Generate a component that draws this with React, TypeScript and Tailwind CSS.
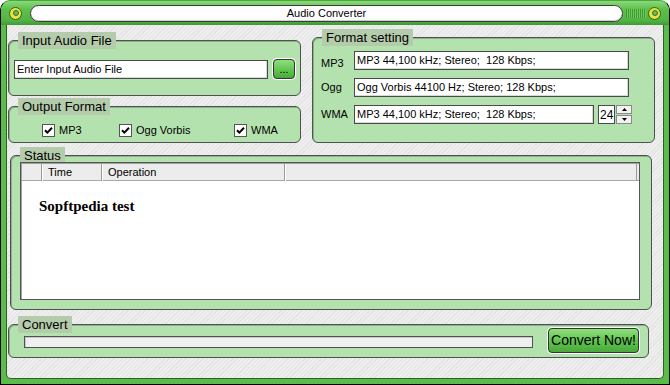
import React from "react";

const ui = "font-['Liberation_Sans',Arial,sans-serif]";

function Knob() {
  return (
    <div className="flex h-[13px] w-[13px] shrink-0 items-center justify-center rounded-full border border-[#2f5f27] bg-[#e8e23c]">
      <div className="h-[6px] w-[6px] rounded-full border border-[#3d6d31] bg-[#5fc14e]" />
    </div>
  );
}

function Group({
  title,
  className,
  children,
}: {
  title: string;
  className: string;
  children?: React.ReactNode;
}) {
  return (
    <fieldset
      className={`rounded-[6px] border border-[#505050] bg-[#b4e2ae] shadow-[inset_1px_1px_0_#8fb08b] ${className}`}
    >
      <legend className="ml-[9px] bg-[#b4ccab] px-[4px] text-[13px] leading-[17px] text-black">
        {title}
      </legend>
      {children}
    </fieldset>
  );
}

function TextBox({ value, w }: { value: string; w: string }) {
  return (
    <div
      className={`flex h-[19px] items-center border border-[#4a4a4a] bg-white pl-[2px] text-[11px] text-black shadow-[inset_-1px_-1px_0_#d8d8d8] ${w}`}
    >
      <span className="whitespace-pre">{value}</span>
    </div>
  );
}

function Check({ label }: { label: string }) {
  return (
    <div className="flex items-center gap-[4px]">
      <div className="flex h-[13px] w-[13px] items-center justify-center border border-[#555] bg-white">
        <svg width="9" height="9" viewBox="0 0 9 9">
          <path d="M1 4.2 L3.4 6.6 L8 1.8" fill="none" stroke="#000" strokeWidth="2" />
        </svg>
      </div>
      <span className="text-[11px] text-black">{label}</span>
    </div>
  );
}

export default function App() {
  return (
    <div
      className={`flex h-[385px] w-[670px] flex-col overflow-hidden rounded-t-[10px] border border-black border-t-[#4aa83c] bg-[#5abd49] ${ui}`}
    >
      {/* title bar */}
      <div className="flex h-[24px] shrink-0 items-center bg-[linear-gradient(#8ad97a,#5dc04c_35%,#53b443_80%,#3f9a33)] pl-[8px]">
        <Knob />
        <div className="ml-[8px] flex h-[17px] w-[593px] items-center justify-center rounded-full border border-[#3c3c3c] bg-white text-[11px] text-black shadow-[inset_0_-1px_0_#cfcfcf]">
          Audio Converter
        </div>
        <div className="ml-[3px] h-[9px] w-[20px] bg-[repeating-linear-gradient(90deg,#3f9a33_0px,#3f9a33_1px,#6ccb5a_1px,#6ccb5a_2px)]" />
        <div className="ml-[2px]">
          <Knob />
        </div>
      </div>

      {/* body */}
      <div className="mb-[5px] ml-[5px] mr-[5px] flex flex-1 flex-col rounded-b-[5px] border border-t-0 border-[#2f5f28] bg-[#ebebeb] bg-[repeating-linear-gradient(135deg,#eeeeee_0px,#eeeeee_2px,#e4e4e4_2px,#e4e4e4_3px)]">
        <div className="flex pl-[1px] pt-[4px]">
          <div className="flex w-[293px] flex-col pt-[3px]">
            <Group title="Input Audio File" className="h-[64px]">
              <div className="mt-[10px] flex items-center pl-[5px]">
                <TextBox value="Enter Input Audio File" w="w-[254px]" />
                <div className="ml-[5px] flex h-[20px] w-[22px] items-center justify-center rounded-[4px] border border-[#333] bg-[linear-gradient(#8ee07c,#5ec34c_60%,#4aa83c)] text-[11px] leading-none text-black shadow-[0_0_0_1px_#ffffff]">
                  ...
                </div>
              </div>
            </Group>
            <Group title="Output Format" className="mt-[2px] h-[45px]">
              <div className="mt-[7px] flex pl-[33px]">
                <div className="w-[77px]">
                  <Check label="MP3" />
                </div>
                <div className="w-[115px]">
                  <Check label="Ogg Vorbis" />
                </div>
                <Check label="WMA" />
              </div>
            </Group>
          </div>

          <Group title="Format setting" className="ml-[11px] h-[114px] w-[343px]">
            <div className="mt-[5px] flex flex-col gap-[8px] pl-[8px]">
              <div className="flex h-[19px]">
                <span className="w-[33px] self-end text-[11px] leading-[13px] text-black">MP3</span>
                <TextBox value="MP3 44,100 kHz; Stereo;  128 Kbps;" w="w-[275px]" />
              </div>
              <div className="flex h-[19px] items-center">
                <span className="w-[33px] text-[11px] text-black">Ogg</span>
                <TextBox value="Ogg Vorbis 44100 Hz; Stereo; 128 Kbps;" w="w-[275px]" />
              </div>
              <div className="flex h-[19px] items-center">
                <span className="w-[33px] text-[11px] text-black">WMA</span>
                <TextBox value="MP3 44,100 kHz; Stereo;  128 Kbps;" w="w-[240px]" />
                <div className="ml-[4px] flex h-[19px] w-[17px] items-center border border-[#4a4a4a] bg-white pl-[1px] text-[12px] text-black">
                  24
                </div>
                <div className="ml-[1px] flex h-[19px] w-[16px] flex-col gap-[1px]">
                  <div className="flex flex-1 items-center justify-center border border-[#8a8a8a] bg-[#f2f2f2]">
                    <svg width="5" height="3" viewBox="0 0 5 3">
                      <path d="M2.5 0 L5 3 L0 3 Z" fill="#000" />
                    </svg>
                  </div>
                  <div className="flex flex-1 items-center justify-center border border-[#8a8a8a] bg-[#f2f2f2]">
                    <svg width="5" height="3" viewBox="0 0 5 3">
                      <path d="M0 0 L5 0 L2.5 3 Z" fill="#000" />
                    </svg>
                  </div>
                </div>
              </div>
            </div>
          </Group>
        </div>

        <Group title="Status" className="ml-[3px] mt-[4px] h-[163px] w-[642px]">
          <div className="relative -mt-[2px] ml-[9px] flex h-[138px] w-[620px] flex-col border border-[#555] bg-white shadow-[inset_1px_1px_0_#a0a0a0]">
            <div className="ml-[1px] mt-[1px] flex h-[17px] bg-[#ececec] text-[11px] text-black shadow-[inset_0_-1px_0_#a8a8a8]">
              <div className="w-[20px] border-r border-[#9a9a9a]" />
              <div className="flex w-[60px] items-center border-r border-l border-l-white border-r-[#9a9a9a] pl-[5px]">
                Time
              </div>
              <div className="flex w-[183px] items-center border-r border-l border-l-white border-r-[#9a9a9a] pl-[5px]">
                Operation
              </div>
              <div className="w-[352px] border-r border-l border-l-white border-r-[#9a9a9a]" />
            </div>
            <div className="ml-[18px] mt-[17px] font-['Liberation_Serif','Times_New_Roman',serif] text-[15px] font-bold leading-[17px] text-black">
              Sopftpedia test
            </div>
          </div>
        </Group>

        <Group title="Convert" className="ml-[1px] mt-[6px] h-[42px] w-[641px]">
          <div className="-mt-[5px] flex h-[25px] items-center">
            <div className="ml-[15px] mt-[3px] h-[12px] w-[509px] border border-[#505050] bg-[#efefef] shadow-[inset_1px_1px_0_#c8c8c8]" />
            <div className="ml-[15px] flex h-[25px] w-[91px] items-center justify-center rounded-[4px] border border-[#333] bg-[linear-gradient(#8ee07c,#5ec34c_55%,#4aa83c)] text-[14px] text-black shadow-[0_0_0_1px_#ffffff]">
              Convert Now!
            </div>
          </div>
        </Group>
      </div>
    </div>
  );
}
